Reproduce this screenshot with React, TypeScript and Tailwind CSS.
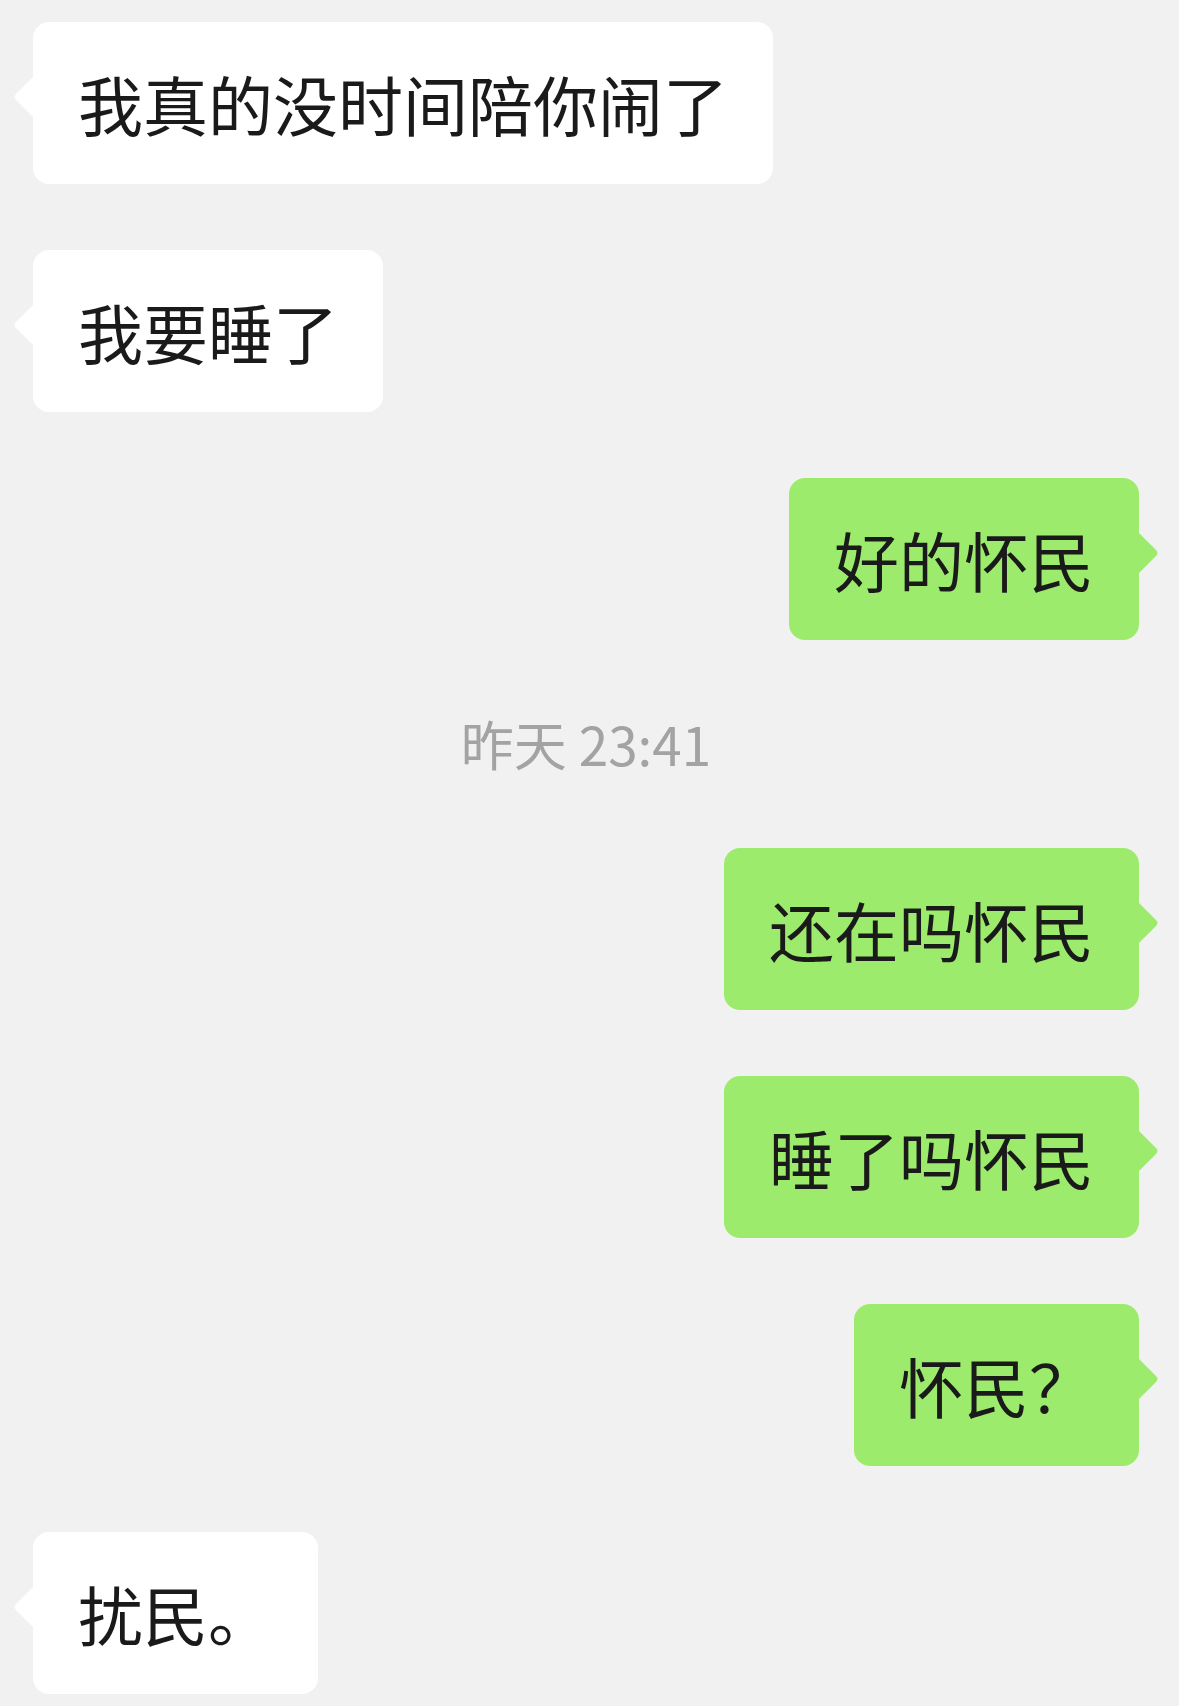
import React from 'react'

type Msg =
  | { kind: 'in'; text: string }
  | { kind: 'out'; text: string }
  | { kind: 'time'; text: string }

const MESSAGES: Msg[] = [
  { kind: 'in', text: '我真的没时间陪你闹了' },
  { kind: 'in', text: '我要睡了' },
  { kind: 'out', text: '好的怀民' },
  { kind: 'time', text: '昨天 23:41' },
  { kind: 'out', text: '还在吗怀民' },
  { kind: 'out', text: '睡了吗怀民' },
  { kind: 'out', text: '怀民？' },
  { kind: 'in', text: '扰民。' },
]

const Tail = ({ side }: { side: 'left' | 'right' }) => {
  const color = side === 'left' ? '#ffffff' : '#9deb6c'
  return (
    <svg
      width="22"
      height="44"
      viewBox="0 0 22 44"
      className={
        side === 'left'
          ? 'absolute left-[-20px] top-[53px]'
          : 'absolute right-[-20px] top-[53px]'
      }
    >
      {side === 'left' ? (
        <path d="M22,0 L3,19 Q0,22 3,25 L22,44 Z" fill={color} />
      ) : (
        <path d="M0,0 L19,19 Q22,22 19,25 L0,44 Z" fill={color} />
      )}
    </svg>
  )
}

const Bubble = ({ text, side }: { text: string; side: 'left' | 'right' }) => {
  return (
    <div
      className={
        side === 'left'
          ? 'relative rounded-[16px] bg-white px-[45px] py-[35px]'
          : 'relative rounded-[16px] bg-[#9deb6c] px-[45px] py-[35px]'
      }
    >
      <Tail side={side} />
      <span className="block whitespace-nowrap text-[65px] leading-[92px] text-[#1a1a1a]">
        {text}
      </span>
    </div>
  )
}

export default function App() {
  return (
    <div
      className="flex min-h-[1706px] w-full flex-col gap-[66px] bg-[#f1f1f1] pl-[33px] pr-[40px] pt-[22px]"
      style={{ fontFamily: '"Noto Sans CJK SC", "Noto Sans", sans-serif' }}
    >
      {MESSAGES.map((m, i) => {
        if (m.kind === 'time') {
          return (
            <div
              key={i}
              className="flex h-[76px] items-center justify-center text-[53px] text-[#a3a3a3]"
            >
              {m.text}
            </div>
          )
        }
        return (
          <div
            key={i}
            className={m.kind === 'in' ? 'flex justify-start' : 'flex justify-end'}
          >
            <Bubble text={m.text} side={m.kind === 'in' ? 'left' : 'right'} />
          </div>
        )
      })}
    </div>
  )
}
